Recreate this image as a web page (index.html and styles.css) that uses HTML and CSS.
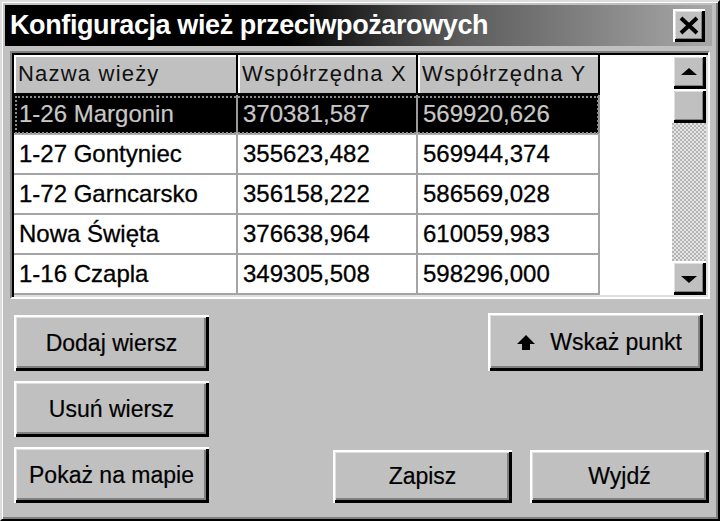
FILE: index.html
```html
<!DOCTYPE html>
<html lang="pl">
<head>
<meta charset="utf-8">
<title>Konfiguracja wież przeciwpożarowych</title>
<link rel="stylesheet" href="styles.css">
</head>
<body>
<div class="window">
  <div class="titlebar">
    <span class="title">Konfiguracja wież przeciwpożarowych</span>
    <button class="close" aria-label="Zamknij">
      <svg width="22" height="19" viewBox="0 0 22 19"><path d="M3 2 L19 17 M19 2 L3 17" stroke="#000" stroke-width="4" fill="none"/></svg>
    </button>
  </div>
  <div class="grid">
    <div class="table">
      <div class="row head">
        <div class="cell c1">Nazwa wieży</div>
        <div class="cell c2">Współrzędna X</div>
        <div class="cell c3">Współrzędna Y</div>
      </div>
      <div class="row sel">
        <div class="cell c1">1-26 Margonin</div>
        <div class="cell c2">370381,587</div>
        <div class="cell c3">569920,626</div>
      </div>
      <div class="row">
        <div class="cell c1">1-27 Gontyniec</div>
        <div class="cell c2">355623,482</div>
        <div class="cell c3">569944,374</div>
      </div>
      <div class="row">
        <div class="cell c1">1-72 Garncarsko</div>
        <div class="cell c2">356158,222</div>
        <div class="cell c3">586569,028</div>
      </div>
      <div class="row">
        <div class="cell c1">Nowa Święta</div>
        <div class="cell c2">376638,964</div>
        <div class="cell c3">610059,983</div>
      </div>
      <div class="row">
        <div class="cell c1">1-16 Czapla</div>
        <div class="cell c2">349305,508</div>
        <div class="cell c3">598296,000</div>
      </div>
    </div>
    <div class="scrollbar">
      <div class="sbtn"><span class="tri up"></span></div>
      <div class="thumb"></div>
      <div class="track"></div>
      <div class="sbtn"><span class="tri down"></span></div>
    </div>
  </div>
  <div class="actions">
    <button class="btn b-add">Dodaj wiersz</button>
    <button class="btn b-point">
      <svg width="18" height="15" viewBox="0 0 18 15"><polygon points="9,0 18,9 13,9 13,15 5,15 5,9 0,9" fill="#000"/></svg>
      <span>Wskaż punkt</span>
    </button>
    <button class="btn b-del">Usuń wiersz</button>
    <button class="btn b-map">Pokaż na mapie</button>
    <button class="btn b-save">Zapisz</button>
    <button class="btn b-exit">Wyjdź</button>
  </div>
</div>
</body>
</html>
```
FILE: styles.css
```css
html, body {
  margin: 0;
  padding: 0;
  background: #c0c0c0;
}
body {
  font-family: "Liberation Sans", Arial, sans-serif;
  color: #000;
}
.window {
  width: 720px;
  height: 521px;
  box-sizing: border-box;
  border: 2px solid;
  border-color: #dcdcdc #000 #000 #dcdcdc;
  box-shadow: inset 1px 1px #fff, inset -2px -2px #808080;
  padding: 3px 6px 3px 3px;
  background: #c0c0c0;
}
.titlebar {
  height: 41px;
  display: flex;
  align-items: center;
  justify-content: space-between;
  padding: 0 7px 0 5px;
  background: linear-gradient(to right, #000 0%, #000 40%, #5a5a5a 64%, #a8a8a8 100%);
}
.title {
  color: #fff;
  font-weight: bold;
  font-size: 27px;
  letter-spacing: -0.4px;
  line-height: 1;
  white-space: nowrap;
}
.close {
  width: 32px;
  height: 33px;
  padding: 0;
  border: 0;
  background: #c0c0c0;
  display: flex;
  align-items: center;
  justify-content: center;
  box-shadow: inset 2px 2px #fff, inset -3px -3px #000, inset 3px 3px #dfdfdf, inset -4px -4px #808080;
}
.grid {
  margin: 5px 0 0 5px;
  width: 700px;
  height: 248px;
  box-sizing: border-box;
  border: 2px solid;
  border-color: #808080 #fff #fff #808080;
  box-shadow: inset 2px 2px #000, inset -2px -2px #dfdfdf;
  padding: 2px;
  display: flex;
}
.grid > .table, .grid > .scrollbar {
  height: 240px;
}
.table {
  flex: 1;
  background: #fff;
  display: flex;
  flex-direction: column;
}
.row {
  display: flex;
  height: 40px;
  width: 586px;
  box-sizing: border-box;
  border-bottom: 2px solid #a4a4a4;
}
.cell {
  box-sizing: border-box;
  height: 100%;
  display: flex;
  align-items: center;
  padding-left: 5px;
  border-right: 2px solid #a4a4a4;
  font-size: 24px;
  -webkit-text-stroke: 0.3px #000;
  white-space: nowrap;
  overflow: hidden;
}
.c1 { width: 224px; }
.c2 { width: 180px; }
.c3 { width: 182px; }
.row.head {
  border-bottom: 2px solid #000;
  background: #c0c0c0;
}
.row.head .cell {
  border-right: 2px solid #000;
  box-shadow: inset 2px 2px #fff;
  font-size: 22px;
  letter-spacing: 1.2px;
  padding-left: 4px;
  color: #111;
  -webkit-text-stroke: 0;
}
.row.sel {
  background: #000;
  color: #c8c8c8;
  outline: 2px dotted #8c8c8c;
  outline-offset: -3px;
  border-bottom-color: #b0b0b0;
}
.row.sel .cell {
  border-right-color: #9a9a9a;
  -webkit-text-stroke: 0.2px #c8c8c8;
}
.scrollbar {
  width: 34px;
  display: flex;
  flex-direction: column;
}
.sbtn, .thumb {
  height: 34px;
  background: #c0c0c0;
  box-shadow: inset 2px 2px #fff, inset -3px -3px #000, inset 3px 3px #dfdfdf, inset -4px -4px #808080;
  display: flex;
  align-items: center;
  justify-content: center;
  flex: none;
}
.track {
  flex: 1;
  background: repeating-conic-gradient(#e4e4e4 0 25%, #b4b4b4 0 50%) 0 0 / 4px 4px;
}
.tri {
  width: 0;
  height: 0;
  border-left: 8px solid transparent;
  border-right: 8px solid transparent;
}
.tri.up { border-bottom: 7px solid #000; margin-top: -2px; }
.tri.down { border-top: 7px solid #000; margin-top: 2px; }
.actions {
  margin: 16px 0 0 9px;
  display: grid;
  grid-template-columns: 195px 124px 179px 18px 179px;
  grid-template-rows: 56px 56px 56px;
  row-gap: 10px;
}
.btn {
  font-family: "Liberation Sans", Arial, sans-serif;
  font-size: 23px;
  color: #000;
  -webkit-text-stroke: 0.2px #000;
  background: #c0c0c0;
  border: 0;
  padding: 0;
  box-shadow: inset 2px 2px #fff, inset -3px -3px #000, inset 3px 3px #dfdfdf, inset -5px -5px #808080;
  display: flex;
  align-items: center;
  justify-content: center;
  gap: 15px;
  white-space: nowrap;
}
.b-add { grid-column: 1; grid-row: 1; }
.b-del { grid-column: 1; grid-row: 2; }
.b-map { grid-column: 1; grid-row: 3; }
.b-point {
  grid-column: 3 / 6;
  grid-row: 1;
  justify-self: end;
  width: 215px;
  margin-right: 6px;
  margin-top: -2px;
  padding-left: 8px;
}
.b-save { grid-column: 3; grid-row: 3; margin-top: 3px; }
.b-exit { grid-column: 5; grid-row: 3; margin-top: 3px; }
```
